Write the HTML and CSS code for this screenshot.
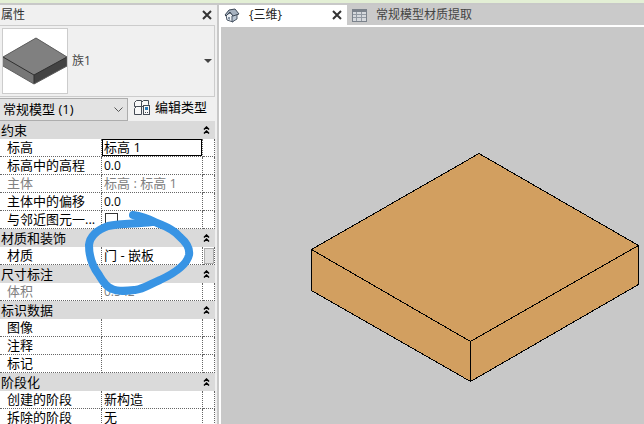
FILE: index.html
```html
<!DOCTYPE html>
<html lang="zh-CN">
<head>
<meta charset="utf-8">
<title>属性</title>
<link rel="stylesheet" href="styles.css">
</head>
<body>
<svg class="defs" width="0" height="0" aria-hidden="true">
  <symbol id="cross" viewBox="0 0 10 10"><path d="M1 1L9 9M9 1L1 9" fill="none" stroke="currentColor" stroke-width="2"/></symbol>
  <symbol id="collapse" viewBox="0 0 7 8"><path d="M1 3.5L3.5 1L6 3.5M1 7.5L3.5 5L6 7.5" fill="none" stroke="#000" stroke-width="1.5"/></symbol>
</svg>
<div class="app">
  <aside class="panel">
    <header class="panel-title">
      <span>属性</span>
      <button class="close" type="button" aria-label="关闭属性"><svg width="10" height="10"><use href="#cross"/></svg></button>
    </header>
    <button class="type-selector" type="button">
      <svg class="thumb" viewBox="0 0 64 64" width="64" height="64">
        <path d="M0 28L33 9L64 28V37L31 55L0 37Z" fill="#777"/>
        <path d="M0 28L33 9L64 28L31 46Z" fill="#808080"/>
        <path d="M31 46L64 28V37L31 55Z" fill="#434343"/>
        <path d="M0 28L31 46V55M31 46L64 28" fill="none" stroke="#303030"/>
        <path d="M0 28L33 9L64 28V37L31 55L0 37" fill="none" stroke="#606060"/>
      </svg>
      <span class="type-name">族1</span>
      <svg width="8" height="4" viewBox="0 0 8 4"><path d="M0 0H8L4 4Z" fill="#444"/></svg>
    </button>
    <div class="filter">
      <div class="combo">
        <select aria-label="类别"><option>常规模型 (1)</option></select>
        <svg class="chevron" width="9" height="6" viewBox="0 0 9 6"><path d="M.5 .5L4.500 4.500L8.500 .5" fill="none" stroke="#555"/></svg>
      </div>
      <button class="edit-type" type="button">
        <svg width="17" height="17" viewBox="0 0 17 17">
          <g fill="#f8f8f8" stroke="#444b55">
            <path d="M.5 3.500L2.500 1.500H7.500V7.500H.5Z"/>
            <path d="M7.500 3.500L9.500 1.500H14.500V5.500L12.500 7.500H7.500Z"/>
            <path d="M.5 9.500L2.500 7.500H7.500V15.500H.5Z"/>
            <rect x="9.500" y="6.500" width="6" height="9"/>
          </g>
          <path d="M11 8H14V11H11Z" fill="#2879b8"/>
          <path d="M11 13.500H12M13 13.500H14" stroke="#444b55"/>
        </svg>
        <span>编辑类型</span>
      </button>
    </div>
    <table class="props">
      <colgroup><col class="c-name"><col><col class="c-link"></colgroup>
      <tbody>
        <tr class="group"><th colspan="2">约束</th><td><svg width="7" height="8"><use href="#collapse"/></svg></td></tr>
        <tr><th>标高</th><td class="editing"><input type="text" value="标高 1" aria-label="标高"></td><td></td></tr>
        <tr><th>标高中的高程</th><td class="num">0.0</td><td></td></tr>
        <tr class="readonly"><th>主体</th><td>标高 : 标高 1</td><td></td></tr>
        <tr><th>主体中的偏移</th><td class="num">0.0</td><td></td></tr>
        <tr><th><label for="near">与邻近图元一...</label></th><td><input id="near" type="checkbox"></td><td></td></tr>
      </tbody>
      <tbody>
        <tr class="group"><th colspan="2">材质和装饰</th><td><svg width="7" height="8"><use href="#collapse"/></svg></td></tr>
        <tr><th>材质</th><td>门 - 嵌板</td><td><button class="browse" type="button" aria-label="浏览材质"></button></td></tr>
      </tbody>
      <tbody>
        <tr class="group"><th colspan="2">尺寸标注</th><td><svg width="7" height="8"><use href="#collapse"/></svg></td></tr>
        <tr class="readonly"><th>体积</th><td class="num">0.542</td><td></td></tr>
      </tbody>
      <tbody>
        <tr class="group"><th colspan="2">标识数据</th><td><svg width="7" height="8"><use href="#collapse"/></svg></td></tr>
        <tr><th>图像</th><td></td><td></td></tr>
        <tr><th>注释</th><td></td><td></td></tr>
        <tr><th>标记</th><td></td><td></td></tr>
      </tbody>
      <tbody>
        <tr class="group"><th colspan="2">阶段化</th><td><svg width="7" height="8"><use href="#collapse"/></svg></td></tr>
        <tr><th>创建的阶段</th><td>新构造</td><td></td></tr>
        <tr><th>拆除的阶段</th><td>无</td><td></td></tr>
      </tbody>
    </table>
    <svg class="marker" width="112" height="90" viewBox="84 207 112 90" aria-hidden="true">
      <path d="M133 215C142 216 149 219 157 223C168 227 175 231 180 237C187 243 190 249 189 255C187 264 175 273 160 280C150 284 144 289 135 290C126 291 118 292 112 289C105 286 102 280 99 275C92 266 89 255 89 245C90 236 97 230 108 226C122 223 136 224 152 222" fill="none" stroke="#3894e4" stroke-width="8" stroke-linecap="round" stroke-linejoin="round"/>
    </svg>
  </aside>
  <main class="view">
    <nav class="tabs">
      <div class="tab active">
        <svg width="16" height="15" viewBox="0 0 16 15">
          <path d="M2 7L6 5L9 7V14L3 12Z" fill="#eef2f6" stroke="#4b5766"/>
          <path d="M8 8L13 6V11L8 14Z" fill="#b9c5d2" stroke="#4b5766"/>
          <path d="M1 7L5 2L11 1L15 6L9 8L6 4L2 8Z" fill="#a6b2c0" stroke="#3d4856"/>
          <path d="M4 9H6V12L4 11Z" fill="#8794a4"/>
        </svg>
        <a href="#view3d">{三维}</a>
        <button class="close" type="button" aria-label="关闭视图"><svg width="10" height="10"><use href="#cross"/></svg></button>
      </div>
      <div class="tab">
        <svg width="15" height="13" viewBox="0 0 15 13">
          <rect x=".5" y=".5" width="14" height="12" fill="#d5d8dc" stroke="#7b828b"/>
          <path d="M1 2H14" stroke="#7b828b" stroke-width="2"/>
          <path d="M1 5.500H14M1 8.500H14M4.500 3V12M9.500 3V12" stroke="#9299a2"/>
        </svg>
        <a href="#schedule">常规模型材质提取</a>
      </div>
    </nav>
    <div class="canvas" id="view3d">
      <svg class="model" viewBox="0 0 423 397" role="img" aria-label="三维模型">
        <g fill="#d29f60" stroke="#000" shape-rendering="crispEdges">
          <path d="M258 126.500L417.500 218.500V257.500L249.500 354.500L90.500 263.500V222.500Z"/>
          <path d="M90.500 222.500L249.500 314.500L417.500 218.500M249.500 314.500V354.500" fill="none"/>
        </g>
      </svg>
    </div>
  </main>
</div>
</body>
</html>
```

FILE: styles.css
```css
* { box-sizing: border-box; }

body {
  margin: 0;
  font: 13px/16px "Open Sans", "Noto Sans CJK SC", sans-serif;
  color: #000;
}

button, input, select { font: inherit; color: inherit; }
button { padding: 0; border: 0; background: none; }
a { color: inherit; text-decoration: none; }
svg { display: block; flex: none; }
.defs { position: absolute; }

.app {
  display: flex;
  height: 100vh;
  overflow: hidden;
  border-top: 3px solid #e3efd5;
}

.panel {
  position: relative;
  flex: none;
  width: 219px;
  overflow: hidden;
  padding-right: 2px;
  border-top: 2px solid #c8c8c8;
  border-right: 2px solid #c8c8c8;
  background: #f0f0f0;
}

.panel-title {
  display: flex;
  align-items: center;
  justify-content: space-between;
  height: 20px;
  padding: 0 3px 0 1px;
  font-size: 12px;
  color: #333;
}

.close { color: #333; }

.type-selector {
  display: flex;
  align-items: center;
  width: 100%;
  height: 72px;
  padding: 0 2px;
  border: 1px solid #ccc;
  border-left: 0;
  font-size: 12px;
  color: #444;
  text-align: left;
}

.thumb {
  box-sizing: content-box;
  border: 1px solid #ccc;
  background: #fff;
}

.type-name { flex: 1; padding-left: 4px; }

.filter {
  display: flex;
  align-items: flex-start;
  height: 24px;
  padding-top: 1px;
}

.combo { position: relative; width: 128px; }

.combo select {
  appearance: none;
  display: block;
  width: 100%;
  height: 23px;
  padding: 0 20px 2px 3px;
  border: 1px solid #adadad;
  border-left: 0;
  border-radius: 0;
  background: #e3e3e3;
}

.chevron {
  position: absolute;
  top: 9px;
  right: 5px;
  pointer-events: none;
}

.edit-type {
  display: flex;
  align-items: center;
  gap: 4px;
  height: 18px;
  margin-left: 6px;
}

.props {
  width: 215px;
  table-layout: fixed;
  border-collapse: separate;
  border-spacing: 0;
  background: #fff;
}

.c-name { width: 102px; }
.c-link { width: 12px; }

.props th, .props td {
  height: 18px;
  padding: 0 0 0 2px;
  border-right: 1px dotted #666;
  border-bottom: 1px dotted #666;
  font-weight: normal;
  line-height: 17px;
  text-align: left;
  white-space: nowrap;
}

.props th { padding-left: 7px; }
.props td:last-child { padding: 0; }
.props .num { font-size: 12px; }

.props .group th, .props .group td {
  border: 0;
  background: #dadada;
}

.props .group th { padding-left: 1px; }
.readonly { color: #808080; }
.props .editing { padding: 0; }

.editing input {
  display: block;
  width: 100%;
  height: 17px;
  padding: 0 1px;
  border: 1px solid #000;
  outline: 0;
  background: #fff;
}

input[type="checkbox"] {
  appearance: none;
  display: block;
  width: 13px;
  height: 13px;
  margin: 1px;
  border: 1px solid #333;
  background: #fff;
}

.browse {
  display: block;
  width: 10px;
  height: 16px;
  margin-left: 1px;
  border: 1px solid #adadad;
  background: #e1e1e1;
}

.marker {
  position: absolute;
  top: 202px;
  left: 84px;
  pointer-events: none;
}

.view {
  display: flex;
  flex: 1;
  flex-direction: column;
  min-width: 0;
  border-top: 2px solid #c8c8c8;
  background: #fff;
}

.tabs {
  display: flex;
  height: 22px;
  background: #fff;
  border-bottom: 2px solid #fff;
  font-size: 12px;
}

.tab {
  display: flex;
  flex: 1;
  align-items: center;
  gap: 9px;
  padding-left: 5px;
  background: #cacaca;
  color: #444;
}

.tab.active {
  flex: none;
  width: 128px;
  padding-right: 5px;
  background: #fff;
  color: #222;
}

.tab.active a { flex: 1; }

.canvas {
  flex: 1;
  min-height: 0;
  margin-left: 2px;
  background: #c8c8c8;
}

.model { width: 100%; height: 100%; }
```
